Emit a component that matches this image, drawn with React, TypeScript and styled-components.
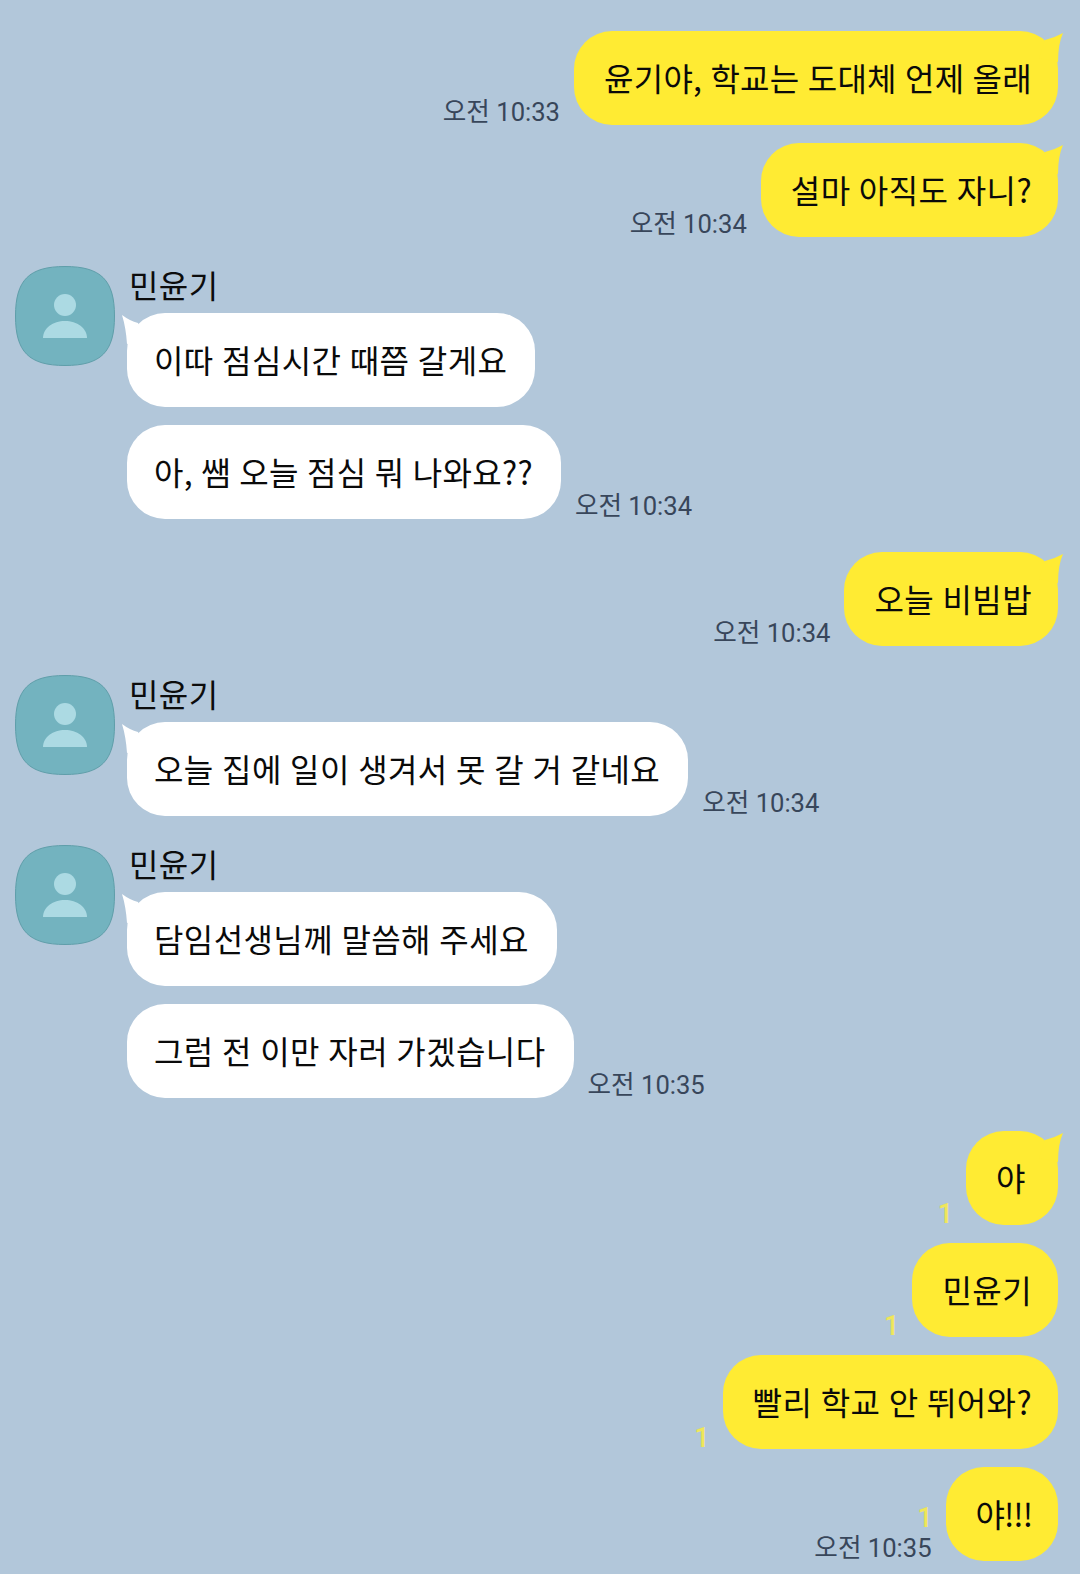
import React from "react";
import styled, { createGlobalStyle } from "styled-components";

const GlobalStyle = createGlobalStyle`
  html, body {
    margin: 0;
    padding: 0;
    background: #b2c7da;
  }
`;

const Page = styled.div`
  width: 1080px;
  height: 1574px;
  box-sizing: border-box;
  padding: 31px 22px 0 15px;
  background: #b2c7da;
  display: flex;
  flex-direction: column;
  overflow: hidden;
  font-family: "Noto Sans CJK KR", "Noto Sans", sans-serif;
`;

const MineGroup = styled.div<{ $top: number }>`
  display: flex;
  flex-direction: column;
  gap: 18px;
  margin-top: ${({ $top }) => $top}px;
`;

const MineRow = styled.div`
  display: flex;
  justify-content: flex-end;
  align-items: flex-end;
  gap: 14px;
`;

const TheirGroup = styled.div<{ $top: number }>`
  display: flex;
  gap: 12px;
  margin-top: ${({ $top }) => $top}px;
`;

const Avatar = styled.svg`
  width: 100px;
  height: 100px;
  flex: none;
`;

const TheirColumn = styled.div`
  display: flex;
  flex-direction: column;
  gap: 18px;
`;

const Name = styled.div`
  height: 29px;
  margin: -2px 0 2px 2px;
  font-size: 32px;
  letter-spacing: 0.4px;
  line-height: 40px;
  color: #0c0c0c;
`;

const TheirRow = styled.div`
  display: flex;
  align-items: flex-end;
  gap: 14px;
`;

const Bubble = styled.div<{ $mine?: boolean; $spacing?: number }>`
  position: relative;
  height: 94px;
  min-width: 92px;
  box-sizing: border-box;
  padding: 0 ${({ $mine }) => ($mine ? 26 : 28)}px 3px
    ${({ $mine }) => ($mine ? 30 : 27)}px;
  display: flex;
  align-items: center;
  border-radius: 38px;
  background: ${({ $mine }) => ($mine ? "#ffeb33" : "#ffffff")};
  color: #0a0a0a;
  font-size: 32px;
  letter-spacing: ${({ $spacing }) => $spacing ?? 0.4}px;
  word-spacing: 0.8px;
  white-space: pre;
`;

const MineTail = styled.svg`
  position: absolute;
  top: 1px;
  right: -5px;
  width: 24px;
  height: 32px;
`;

const TheirTail = styled.svg`
  position: absolute;
  top: 1px;
  left: -6px;
  width: 24px;
  height: 32px;
`;

const Meta = styled.div`
  display: flex;
  flex-direction: column;
  align-items: flex-end;
  padding-bottom: 1px;
`;

const Time = styled.div`
  font-family: Roboto, "Noto Sans CJK KR", sans-serif;
  font-size: 25.6px;
  line-height: 24px;
  color: #38465a;
  white-space: pre;
`;

const Receipt = styled.div<{ $stacked?: boolean }>`
  margin: 0 -1px ${({ $stacked }) => ($stacked ? 8 : 0)}px 0;
  font-family: Roboto, sans-serif;
  font-size: 27px;
  font-weight: 500;
  line-height: 20px;
  color: #efe65a;
`;

const PersonAvatar = () => (
  <Avatar viewBox="0 0 100 100">
    <path
      d="M50 .5C86 .5 99.500 14 99.500 50S86 99.500 50 99.500.5 86 .5 50 14 .5 50 .5Z"
      fill="#73b3bf"
      stroke="#5f9ea9"
    />
    <circle cx="50" cy="39" r="11" fill="#acdae3" />
    <path d="M28 72C28 62 38 55 50 55s22 7 22 17Z" fill="#acdae3" />
  </Avatar>
);

type MineProps = {
  text: string;
  time?: string;
  read?: boolean;
  tail?: boolean;
  spacing?: number;
};

const Mine = ({ text, time, read, tail, spacing }: MineProps) => (
  <MineRow>
    <Meta>
      {read && <Receipt $stacked={!!time}>1</Receipt>}
      {time && <Time>{time}</Time>}
    </Meta>
    <Bubble $mine $spacing={spacing}>
      {tail && (
        <MineTail viewBox="0 0 24 32">
          <path d="M24 1Q15 6 6 8L0 26 19 30Q19 12 24 1Z" fill="#ffeb33" />
        </MineTail>
      )}
      {text}
    </Bubble>
  </MineRow>
);

type TheirsProps = {
  text: string;
  time?: string;
  tail?: boolean;
  spacing?: number;
};

const Theirs = ({ text, time, tail, spacing }: TheirsProps) => (
  <TheirRow>
    <Bubble $spacing={spacing}>
      {tail && (
        <TheirTail viewBox="0 0 24 32">
          <path d="M1 1Q9 7 17 9L24 26 6 30Q5 14 1 1Z" fill="#ffffff" />
        </TheirTail>
      )}
      {text}
    </Bubble>
    {time && (
      <Meta>
        <Time>{time}</Time>
      </Meta>
    )}
  </TheirRow>
);

export default function App() {
  return (
    <>
      <GlobalStyle />
      <Page>
        <MineGroup $top={0}>
          <Mine tail spacing={0.25} text="윤기야, 학교는 도대체 언제 올래" time="오전 10:33" />
          <Mine tail text="설마 아직도 자니?" time="오전 10:34" />
        </MineGroup>
        <TheirGroup $top={29}>
          <PersonAvatar />
          <TheirColumn>
            <Name>민윤기</Name>
            <Theirs tail text="이따 점심시간 때쯤 갈게요" />
            <Theirs spacing={0.3} text="아, 쌤 오늘 점심 뭐 나와요??" time="오전 10:34" />
          </TheirColumn>
        </TheirGroup>
        <MineGroup $top={33}>
          <Mine tail text="오늘 비빔밥" time="오전 10:34" />
        </MineGroup>
        <TheirGroup $top={29}>
          <PersonAvatar />
          <TheirColumn>
            <Name>민윤기</Name>
            <Theirs tail text="오늘 집에 일이 생겨서 못 갈 거 같네요" time="오전 10:34" />
          </TheirColumn>
        </TheirGroup>
        <TheirGroup $top={29}>
          <PersonAvatar />
          <TheirColumn>
            <Name>민윤기</Name>
            <Theirs tail text="담임선생님께 말씀해 주세요" />
            <Theirs text="그럼 전 이만 자러 가겠습니다" time="오전 10:35" />
          </TheirColumn>
        </TheirGroup>
        <MineGroup $top={33}>
          <Mine tail text="야" read />
          <Mine text="민윤기" read />
          <Mine text="빨리 학교 안 뛰어와?" read />
          <Mine text="야!!!" read spacing={-1} time="오전 10:35" />
        </MineGroup>
      </Page>
    </>
  );
}
